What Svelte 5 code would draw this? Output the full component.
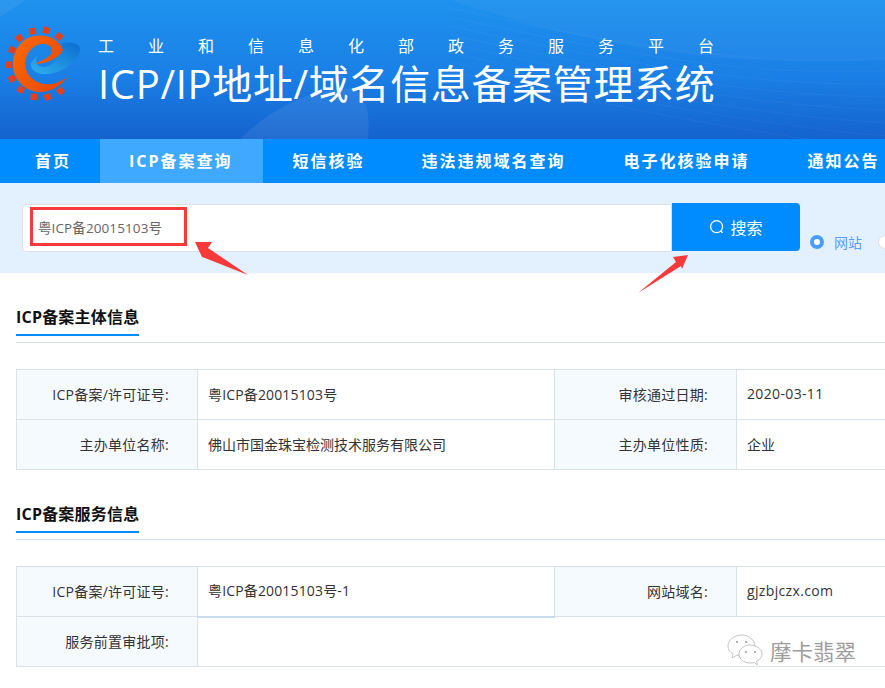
<script>
	const nav = ['首页', 'ICP备案查询', '短信核验', '违法违规域名查询', '电子化核验申请', '通知公告'];
	const org = 'ICP备案/许可证号:';
	const teeth = [
		[9, 65], [12, 50], [19, 38], [32, 31], [46, 30], [59, 36],
		[12, 79], [21, 90], [34, 97], [48, 97], [61, 91]
	].map(([x, y]) => ({ x, y, a: (Math.atan2(y - 63.5, x - 36) * 180) / Math.PI + 90 }));
	const waves = [0, 1, 2, 3, 4, 5, 6, 7];
</script>

<div class="page">
	<header class="banner">
		<svg class="deco" width="885" height="139" viewBox="0 0 885 139">
			<path d="M0 0h26L0 17z" fill="#fff" opacity="0.06" />
			<path d="M240 139c30-30 75-52 110-50 18 2 20 28 18 50z" fill="#fff" opacity="0.07" />
			<path d="M450 0c120 40 260 70 435 60V0z" fill="#fff" opacity="0.03" />
			{#each waves as w}
				<path d="M450 {8 + w * 9}c140 30 280 60 435 {50 + w * 4}" fill="none" stroke="#fff" stroke-width="1" opacity="0.04" />
			{/each}
		</svg>
		<svg class="logo" width="90" height="104" viewBox="0 0 90 104">
			<defs>
				<linearGradient id="sw" x1="0" y1="0" x2="1" y2="0.6">
					<stop offset="0" stop-color="#ff6a00" />
					<stop offset="1" stop-color="#e84a08" />
				</linearGradient>
				<linearGradient id="bl" x1="1" y1="0" x2="0" y2="1">
					<stop offset="0" stop-color="#0a6cd0" />
					<stop offset="1" stop-color="#2fb0ee" />
				</linearGradient>
			</defs>
			{#each teeth as t}
				<rect x={t.x - 3} y={t.y - 3} width="6.500" height="6.500" fill="#e5401c" transform="rotate({t.a} {t.x} {t.y})" />
			{/each}
			<path d="M62 43C72 41 81 44 80 50 79 60 65 72 48 74 37 75 30 70 31 63 33 60 36 56 38 55 34 62 37 67 44 67 54 66 62 56 62 43z" fill="url(#bl)" />
			<path d="M63 50C58 37 44 34 34 36 20 39 13 52 13 64 13 82 28 93 42 92 53 91 63 84 67 77 58 84 48 86 40 83 28 79 23 68 26 58 29 48 38 43 45 44 50 45 53 48 52 52 51 57 42 60 35 64 43 64 58 60 63 50z" fill="url(#sw)" />
		</svg>
		<div class="titles">
			<p class="sub">工业和信息化部政务服务平台</p>
			<h1>ICP/IP地址/域名信息备案管理系统</h1>
		</div>
	</header>

	<nav class="menu">
		{#each nav as item, i}
			<a href="#top" class:first={i === 0} class:active={i === 1}>{item}</a>
		{/each}
	</nav>

	<div class="searchbar">
		<div class="field">粤ICP备20015103号</div>
		<button class="go">
			<svg width="16" height="16" viewBox="0 0 16 16" fill="none" stroke="#fff" stroke-width="1.3">
				<circle cx="7.6" cy="7.6" r="6" />
				<path d="M11.8 12l1.8 1.8" />
			</svg>
			搜索
		</button>
		<div class="radios">
			<span class="radio on"></span>
			<span class="radio-label">网站</span>
			<span class="radio"></span>
		</div>
	</div>

	<section>
		<div class="head"><h2>ICP备案主体信息</h2></div>
		<table>
			<tbody>
				<tr>
					<th>{org}</th>
					<td class="num">粤ICP备20015103号</td>
					<th>审核通过日期:</th>
					<td class="latin">2020-03-11</td>
				</tr>
				<tr>
					<th>主办单位名称:</th>
					<td>佛山市国金珠宝检测技术服务有限公司</td>
					<th>主办单位性质:</th>
					<td>企业</td>
				</tr>
			</tbody>
		</table>
	</section>

	<section>
		<div class="head"><h2>ICP备案服务信息</h2></div>
		<table>
			<tbody>
				<tr>
					<th>{org}</th>
					<td class="thick num">粤ICP备20015103号-1</td>
					<th>网站域名:</th>
					<td class="latin">gjzbjczx.com</td>
				</tr>
				<tr>
					<th>服务前置审批项:</th>
					<td colspan="3"></td>
				</tr>
			</tbody>
		</table>
	</section>

	<!-- annotations pasted on top of the screenshot -->
	<div class="mark"></div>
	<svg class="arrows" width="885" height="300" viewBox="0 0 885 300">
		<path d="M195 242L212 242 208 248 248 275 205 258 202 257z" fill="#f8393a" />
		<path d="M688 255L673 257 676 262 638 293 681 266 682 269z" fill="#f8393a" />
	</svg>

	<div class="wm">
		<svg width="36" height="32" viewBox="0 0 36 32" fill="#fff" stroke="#aaa" stroke-width="0.7">
			<path d="M15 1C7 1 1 6 1 12c0 4 2 6 5 8l-1 4 5-3c2 .5 3 .5 5 .5 8 0 13-5 13-9.500S23 1 15 1z" />
			<path d="M23 11c-6 0-11 4-11 9s5 9 11 9c1.500 0 3-.2 4-.6l3.500 2.600-.8-3.800C33 25.500 35 23 35 20c0-5-6-9-12-9z" />
			<circle cx="10" cy="8" r="1" fill="#999" stroke="none" />
			<circle cx="19" cy="8" r="1" fill="#999" stroke="none" />
			<circle cx="19" cy="18" r="1" fill="#999" stroke="none" />
			<circle cx="28" cy="18" r="1" fill="#999" stroke="none" />
		</svg>
		<span>摩卡翡翠</span>
	</div>
</div>

<style>
	:global(body) {
		margin: 0;
		background: #fff;
	}

	.page {
		position: relative;
		width: 885px;
		height: 688px;
		overflow: hidden;
		font-family: 'Open Sans', 'Noto Sans CJK SC', sans-serif;
		font-size: 14px;
		color: #333;
	}

	.banner {
		position: relative;
		display: flex;
		height: 139px;
		box-sizing: border-box;
		padding-left: 98px;
		background: linear-gradient(180deg, #1e92ee 0%, #1a7fe6 55%, #1562cd 100%);
	}

	.deco,
	.logo {
		position: absolute;
		left: 0;
		top: 0;
	}

	.titles {
		color: #fff;
	}

	.sub {
		margin: 35px 0 0;
		font-size: 16px;
		line-height: 22px;
		letter-spacing: 34px;
		white-space: nowrap;
	}

	h1 {
		margin: 0;
		font-size: 40px;
		font-weight: 400;
		line-height: 54px;
		letter-spacing: 0.65px;
		white-space: nowrap;
	}

	.menu {
		display: flex;
		height: 44px;
		background: #008cff;
	}

	.menu a {
		padding: 0 29px;
		color: #fff;
		font-size: 16px;
		font-weight: 700;
		line-height: 45px;
		letter-spacing: 2px;
		text-decoration: none;
		white-space: nowrap;
	}

	.menu a.first {
		padding: 0 29px 0 35px;
	}

	.menu a.active {
		padding-right: 30px;
		background: #3fa9ff;
	}

	.menu a:nth-child(3) {
		padding: 0 28px 0 30px;
	}

	.searchbar {
		display: flex;
		height: 90px;
		box-sizing: border-box;
		padding: 20px 0 0 22px;
		background: #e3f1fe;
	}

	.field {
		flex: none;
		width: 650px;
		height: 48px;
		margin-top: 1px;
		box-sizing: border-box;
		padding-left: 15px;
		border: 1px solid #dcdfe6;
		border-radius: 4px 0 0 4px;
		background: #fff;
		color: #666;
		font-size: 13.500px;
		line-height: 46px;
		letter-spacing: 0.1px;
	}

	.go {
		display: flex;
		flex: none;
		align-items: center;
		justify-content: center;
		gap: 5px;
		width: 128px;
		height: 48px;
		padding: 0 0 1px;
		border: 0;
		border-radius: 0 4px 4px 0;
		background: #008cff;
		color: #fff;
		font-family: inherit;
		font-size: 16px;
	}

	.radios {
		display: flex;
		flex: none;
		align-items: center;
		height: 20px;
		margin: 29px 0 0 10px;
		color: #5b9dfb;
	}

	.radio {
		width: 14px;
		height: 14px;
		flex: none;
		box-sizing: border-box;
		border: 1px solid #dcdfe6;
		border-radius: 50%;
		background: #fff;
	}

	.radio.on {
		border: 4.500px solid #4a9dfc;
	}

	.radio-label {
		margin: 0 16px 0 10px;
	}

	section {
		padding: 32px 0 0 16px;
	}

	.head {
		margin-bottom: 26px;
		padding-bottom: 6px;
		border-bottom: 1px solid #d3dfeb;
	}

	h2 {
		display: inline-block;
		margin: 0;
		padding-bottom: 5px;
		border-bottom: 2px solid #008cff;
		color: #111;
		font-size: 16px;
		font-weight: 700;
		line-height: 24px;
		letter-spacing: 0.2px;
	}

	table {
		width: 1000px;
		table-layout: fixed;
		border-collapse: collapse;
	}

	th,
	td {
		height: 50px;
		box-sizing: border-box;
		padding: 0 10px 2px;
		border: 1px solid #d9e2ea;
		font-weight: 400;
		white-space: nowrap;
	}

	th {
		padding: 0 28px 2px 0;
		background: #f5faff;
		letter-spacing: 0.25px;
		text-align: right;
	}

	th:nth-child(1) {
		width: 181px;
	}

	td:nth-child(2) {
		width: 357px;
	}

	th:nth-child(3) {
		width: 182px;
	}

	td.num {
		letter-spacing: 0.15px;
	}

	td.latin {
		letter-spacing: 0.35px;
	}

	td.thick {
		border-bottom: 2px solid #c9dcee;
	}

	.mark {
		position: absolute;
		left: 30px;
		top: 207px;
		width: 157px;
		height: 39px;
		box-sizing: border-box;
		border: 3px solid #f8393a;
	}

	.arrows {
		position: absolute;
		left: 0;
		top: 0;
	}

	.wm {
		position: absolute;
		left: 727px;
		top: 632px;
		display: flex;
		align-items: center;
		gap: 7px;
	}

	.wm span {
		margin-top: 4px;
		color: #9c9c9c;
		font-size: 21.500px;
		line-height: 32px;
		text-shadow: 0 0 2px #fff;
	}
</style>
